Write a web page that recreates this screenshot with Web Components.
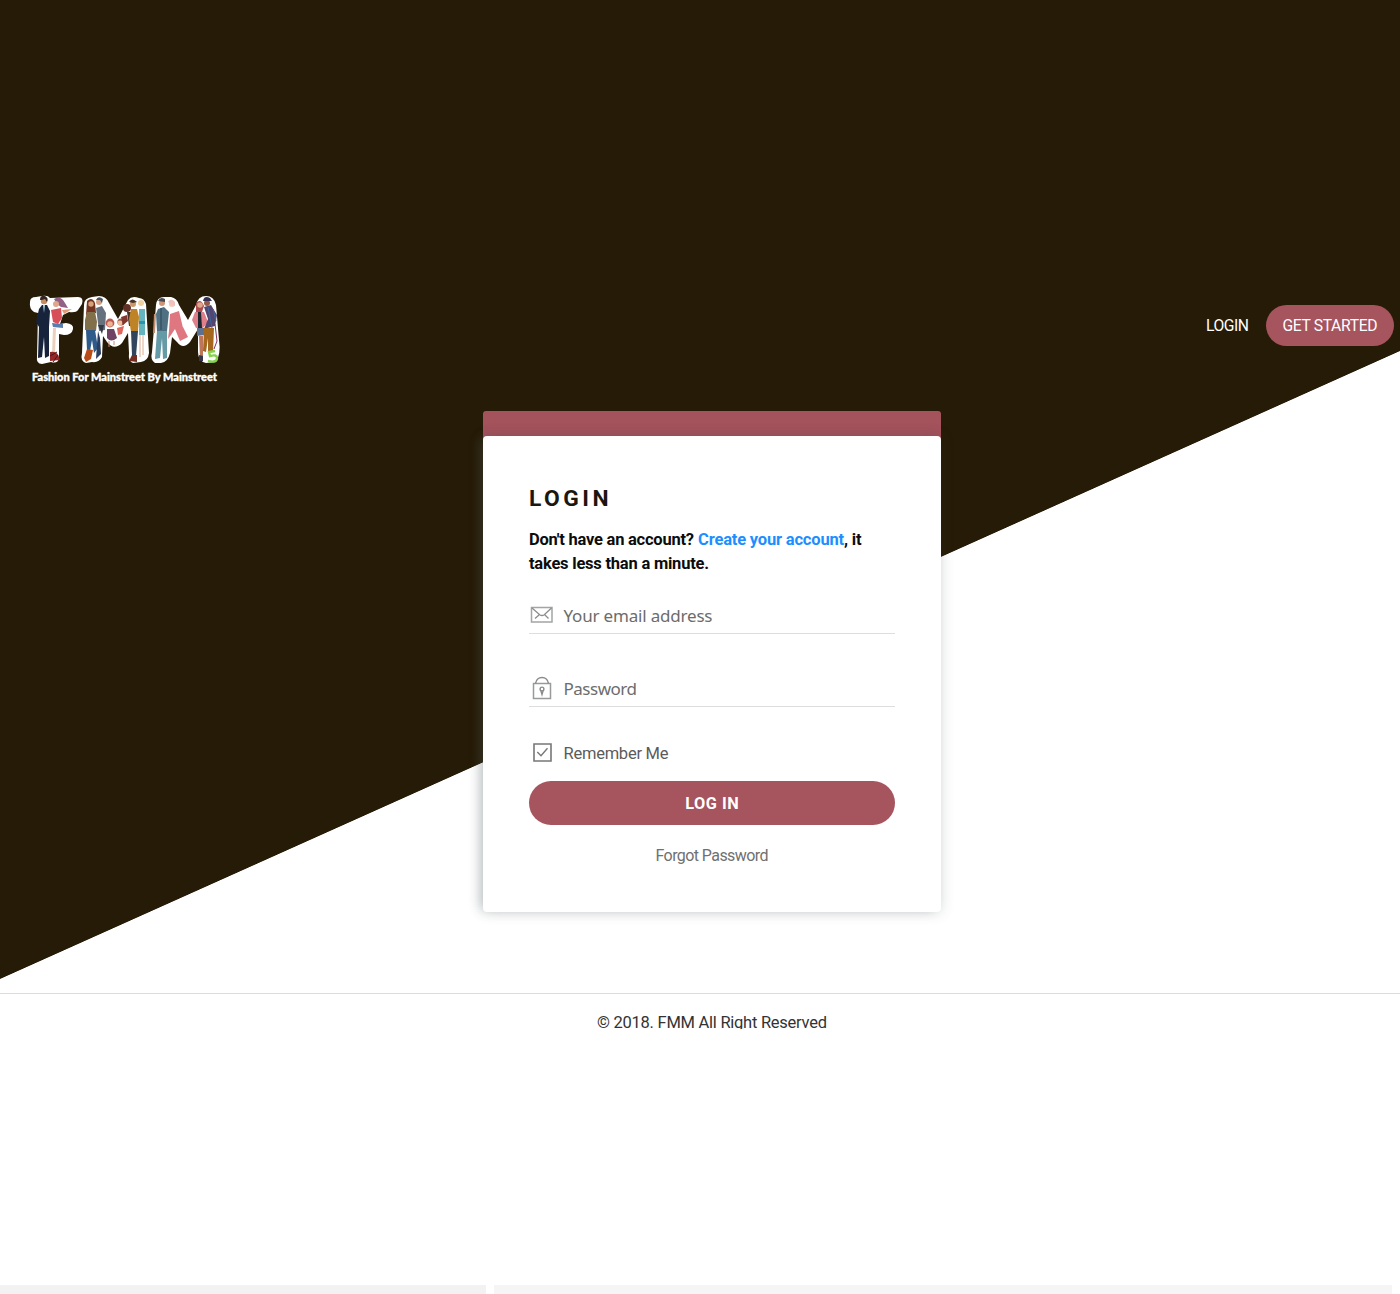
<!DOCTYPE html>
<html lang="en">
<head>
<meta charset="utf-8">
<title>FMM Login</title>
<style>
html,body{margin:0;padding:0;background:#fff}
body{font-family:Roboto,"Liberation Sans",sans-serif;color:#000}
</style>
</head>
<body>
<fmm-page></fmm-page>
<script>
const define = (name, html, after) => {
  const t = document.createElement('template');
  t.innerHTML = html;
  customElements.define(name, class extends HTMLElement {
    connectedCallback() {
      if (this.shadowRoot) return;
      this.attachShadow({mode: 'open'}).append(t.content.cloneNode(true));
      if (after) after(this);
    }
  });
};

/* One line of text whose tracking is adjusted to an exact width */
define('fit-text', `<style>:host{display:inline-block;white-space:pre}</style><slot></slot>`, el => {
  const target = +el.getAttribute('w');
  const n = el.textContent.length;
  const w = el.getBoundingClientRect().width;
  el.style.letterSpacing = ((target - w) / (n - 1)) + 'px';
  el.style.marginRight = (-(target - w) / (n - 1)) + 'px';
});

define('fmm-logo', `<style>:host{display:block;width:190px;height:90px}svg{display:block;overflow:visible}
text{font:900 10.5px Lato,sans-serif;fill:#fff;stroke:#fff;stroke-width:.35}</style>
<svg width="190" height="90" viewBox="0 0 190 90">
<g fill="#fff">
<path d="M0 7Q0 2 6 2L12 1Q18 0 20 3L48 2Q54 2 52 9L48 15Q46 18 39 17L33 20L30 29L36 28Q44 29 43 34Q42 40 34 40L29 39L29 63Q28 69 21 67L12 69Q6 69 7 61L8 18L4 17Q-1 14 0 7Z"/>
<path d="M54 10Q54 3 62 2L69 1Q76 1 79 8L88 24L98 5Q102 0 109 3Q114 3 116 9L119 58Q118 66 111 67L103 68Q98 66 99 58L98 38L92 48Q84 56 77 47L73 41L72 62Q69 68 62 67L56 68Q50 66 52 58Z"/>
<path d="M126 10Q127 2 134 2L141 2Q147 3 149 10L158 25L166 10Q168 1 176 1Q184 1 186 10L189 45Q191 59 186 67L176 68Q168 66 168 57L168 34L160 47Q153 55 147 47L142 42L140 58Q138 67 131 68L125 68Q120 65 122 57Z"/>
</g>
<!-- couple on the F -->
<path d="M9 14L12 10H17L20 16L19 32L19 61L15 63L14 42L12 62L8 63L9 32L6 27Z" fill="#17223b"/>
<path d="M13 10L15 10L14 18Z" fill="#a8d9e7"/><circle cx="14" cy="6" r="3.2" fill="#c58c62"/><path d="M10 5Q10 0 15 1Q19 3 17 7L15 4L12 5Z" fill="#352822"/>
<path d="M24 4Q31 0 35 8L38 13L31 12L27 9Z" fill="#936086"/><circle cx="26" cy="9" r="3" fill="#dda88b"/><path d="M21 15L31 13L32 23L28 29L23 27Z" fill="#d75059"/><path d="M32 15L42 14L34 19Z" fill="#df9a79"/>
<path d="M22 28L33 29L33 33L23 32Z" fill="#597ead"/><path d="M23 33L26 33L25 58L22 60Z" fill="#ead0bd"/><path d="M20 57Q28 55 30 65L20 66Z" fill="#962727"/><path d="M20 61l7-4M23 67l5-7" stroke="#3c1a24"/>
<!-- first couple and children on the first M -->
<path d="M57 6Q62 1 65 8L66 18L56 20Z" fill="#733522"/><circle cx="61" cy="9" r="2.7" fill="#d6a27a"/><path d="M57 17L65 17L67 27L66 36L55 35L55 25Z" fill="#82704a"/><path d="M56 35L65 35L68 53L64 58L62 45L60 56L57 55Z" fill="#2f5b8a"/><path d="M57 54L63 55L61 64L56 67L54 63Z" fill="#b84c19"/>
<circle cx="69" cy="7" r="3" fill="#d5a184"/><path d="M66 5Q68 0 73 4L72 8L70 5Z" fill="#485361"/><path d="M66 13L72 11L76 18L75 35L69 36Z" fill="#65717c"/><path d="M68 36L70 43L71 59L66 64L67 49Z" fill="#293e61"/><path d="M68 30L74 30L72 39Z" fill="#333943"/>
<circle cx="80" cy="28" r="4.4" fill="#bd584e"/><circle cx="80" cy="29" r="2.8" fill="#ebb398"/><path d="M77 34H84L87 43Q81 48 77 43Z" fill="#704263"/><path d="M79 46v6M84 46v4" stroke="#cf8b70"/>
<circle cx="91" cy="27" r="3.6" fill="#995948"/><circle cx="90" cy="28" r="2.4" fill="#efbda1"/><path d="M87 33L94 31L92 39L88 40Z" fill="#df665c"/>
<circle cx="97" cy="13" r="4" fill="#633028"/><path d="M97 17L102 17L104 31L99 31Z" fill="#4a332b"/><path d="M91 22l6-2 1 6-5 4Z" fill="#82372e"/>
<circle cx="103" cy="9" r="3" fill="#cd9869"/><path d="M99 7Q102 2 107 7L103 8Z" fill="#493326"/><path d="M101 14L107 14L109 22L108 36L101 37L99 24Z" fill="#bd8326"/><path d="M101 36H108L106 61L102 60Z" fill="#31455c"/><path d="M102 60L107 60L107 67L99 66Z" fill="#742b20"/>
<circle cx="111" cy="8" r="3" fill="#efd09e"/><path d="M109 14H115L115 40L109 40Z" fill="#65b5be"/><path d="M109 26h6v3h-6Z" fill="#2894b7"/><path d="M110 40v22M113 40v20" stroke="#dcae8f"/>
<!-- second M -->
<circle cx="132" cy="8" r="3" fill="#cc9777"/><path d="M128 6Q130 1 135 4L135 7Z" fill="#494b53"/><path d="M128 14L134 12L139 17L137 36L127 36L126 19Z" fill="#4e7081"/><path d="M131 13v22" stroke="#2d4357"/><path d="M127 36H137L137 63L133 64L132 43L130 63L125 64Z" fill="#659aa7"/><path d="M125 19l-1 19" stroke="#c28f73" stroke-width="2"/>
<circle cx="142" cy="9" r="3" fill="#f2c8b9"/><path d="M138 7Q141 2 145 7L145 11Z" fill="#eec2bd"/><path d="M140 19L149 16L153 33L151 36L145 34L141 40L138 44L139 36Z" fill="#df7781"/><path d="M145 34L153 32L158 42L150 46Z" fill="#df7781"/>
<path d="M166 8Q171 3 174 11L171 20L166 22Z" fill="#ab4b4e"/><circle cx="170" cy="10" r="2.8" fill="#dca78c"/><path d="M165 17L174 17L178 27L173 33L166 33L162 25Z" fill="#df7f8a"/><path d="M168 17h3l1 16h-4Z" fill="#21252d"/><path d="M167 33H174L175 40L167 41Z" fill="#5c7192"/><path d="M169 41L173 41L173 61L170 63Z" fill="#bd7659"/>
<circle cx="177" cy="8" r="3" fill="#945844"/><path d="M173 6Q174 0 180 3L182 6Z" fill="#352f56"/><path d="M174 12L181 10L187 20L185 31L174 34L178 24Z" fill="#54456e"/><path d="M178 12l4 21M183 14l3 12" stroke="#3269a1"/><path d="M174 33H184L183 57L178 57L178 43L176 57L173 56Z" fill="#a5671d"/><path d="M185 29l2 17-3 8" stroke="#84355c" fill="none"/>
<path d="M185 56L179 57L180 61Q187 59 187 63Q187 68 178 66" fill="none" stroke="#84d34b" stroke-width="2.4"/><path d="M169 60l4 1v5h-4Z" fill="#37334b"/>
<text x="2" y="86" textLength="185" lengthAdjust="spacingAndGlyphs">Fashion For Mainstreet By Mainstreet</text>
</svg>`);

define('pill-button', `<style>:host{display:flex;align-items:center;justify-content:center;box-sizing:border-box;background:#a6545e;color:#fff;border-radius:22px}</style><slot></slot>`);

define('site-header', `<style>
:host{display:flex;justify-content:space-between;align-items:flex-start;height:116px;padding:0 6px 0 30px}
nav{display:flex;align-items:center;gap:17px;margin-top:10px;color:#fff;font-size:15.7px}
pill-button{width:128px;height:41px}
</style><fmm-logo></fmm-logo><nav><fit-text w="43">LOGIN</fit-text><pill-button><fit-text w="95">GET STARTED</fit-text></pill-button></nav>`);

define('field-row', `<style>
:host{display:flex;align-items:center;box-sizing:border-box;height:37px;border-bottom:1px solid #dedede;color:#6c6c6c;font:17px "Noto Sans","Open Sans",sans-serif}
.i{display:flex;width:34.5px;flex:none}
</style><span class="i"><slot name="icon"></slot></span><slot></slot>`);

define('login-card', `<style>
:host{display:block;width:458px}
.bar{height:30px;background:#a4525c;border-radius:3px 3px 0 0}
.card{box-sizing:border-box;height:476px;margin-top:-5px;padding:47px 46px 0;background:#fff;border-radius:4px;box-shadow:0 0 14px rgba(60,70,70,.2),-6px 0 12px -3px rgba(90,105,110,.28);display:flex;flex-direction:column;position:relative}
h1{margin:0;height:32px;font-size:22.8px;line-height:32px;font-weight:700;color:#1b1710}
p{margin:12.5px 0 0;height:49.5px;font-size:16.5px;line-height:24.5px;font-weight:700;color:#0c0c0c}
a{color:#1d8eff}
.email{margin-top:20px}.pw{margin-top:36px}
svg{display:block;fill:none;stroke:#8b8b8b;stroke-width:1.4}
.rem{display:flex;align-items:center;height:24px;margin-top:33px;font-size:16.5px;color:#5b5b5b}
.rem svg{margin:0 11.5px 0 4px}
.rem fit-text{padding-top:2px}
pill-button{height:44px;margin-top:17px;padding-top:1px;font-size:16.3px;font-weight:700;flex:none}
.forgot{text-align:center;font-size:16px;line-height:24px;margin-top:19px;color:#707070}
</style>
<div class="bar"></div>
<div class="card">
<h1><fit-text w="79.5">LOGIN</fit-text></h1>
<p><fit-text w="165">Don't have an account?</fit-text> <a><fit-text w="146">Create your account</fit-text></a><fit-text w="17.5">, it</fit-text><br><fit-text w="180">takes less than a minute.</fit-text></p>
<field-row class="email"><svg slot="icon" width="24" height="18" viewBox="0 0 24 18"><path d="M2.5 1.5H23V16H2.5Z" stroke="#a2a5a5" stroke-width="1.5"/><path d="M3 2L11 9Q13 10 15 9L22.5 2M6 12.5L10 9M19.5 12.5L16 9" stroke="#8b8d8d" stroke-width="1.3"/></svg><fit-text w="149">Your email address</fit-text></field-row>
<field-row class="pw"><svg slot="icon" width="24" height="26" viewBox="0 0 24 26"><path d="M4.5 8.5H21.5V23.5H4.5Z" stroke="#999b9b" stroke-width="1.5"/><path d="M6.5 8.5C8 .5 18 .5 19.5 8.5"/><circle cx="13" cy="14" r="1.9"/><path d="M12 16L13 19.5L14 16"/></svg><fit-text w="73.5">Password</fit-text></field-row>
<div class="rem"><svg width="19" height="19" viewBox="0 0 19 19"><path d="M1 1H18V18H1Z" stroke="#777" stroke-width="1.6"/><path d="M4.3 9L8 12.7L14.5 5.3" stroke="#777"/></svg><fit-text w="105">Remember Me</fit-text></div>
<pill-button><fit-text w="53.5">LOG IN</fit-text></pill-button>
<div class="forgot"><fit-text w="113">Forgot Password</fit-text></div>
</div>`);

define('site-footer', `<style>
:host{display:flex;justify-content:center;align-items:flex-start;height:36px;box-sizing:border-box;overflow:hidden;border-top:1px solid #dcdcdc;padding:16px 0 0 24px;font-size:16.5px;line-height:25px;color:#333}
</style><fit-text w="230">© 2018. FMM All Right Reserved</fit-text>`);

define('fmm-page', `<style>
:host{display:flex;flex-direction:column;height:1294px;overflow:hidden}
main{box-sizing:border-box;flex:none;height:993px;padding-top:295px;background:linear-gradient(#261b06,#261b06) 0 0/100% 351px no-repeat,linear-gradient(to bottom right,#261b06 calc(50% - .4px),#fff calc(50% + .4px)) 0 351px/100% 628px no-repeat,#fff}
login-card{margin-left:483px}
.next{display:flex;gap:8px;margin-top:auto;height:9px}
.next i{background:#f2f2f2;width:486px}.next i+i{background:#f5f5f5;width:898px}
</style><main><site-header></site-header><login-card></login-card></main><site-footer></site-footer><div class="next"><i></i><i></i></div>`);
</script>
</body>
</html>
